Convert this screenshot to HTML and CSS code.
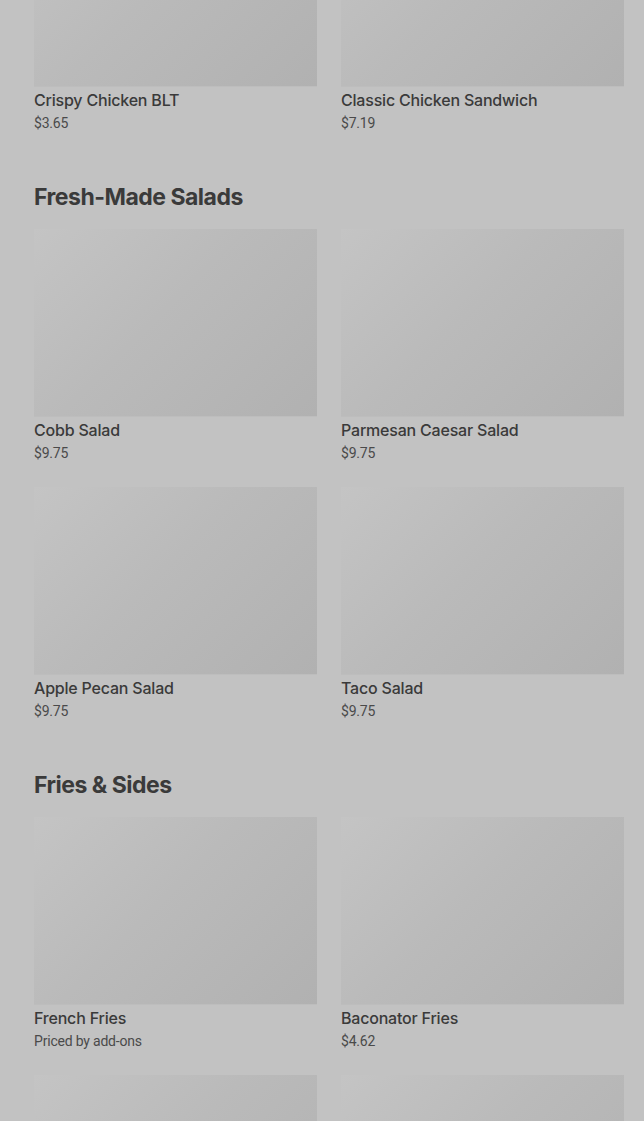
FILE: index.html
```html
<!DOCTYPE html>
<html lang="en">
<head>
    <meta charset="UTF-8">
    <meta name="viewport" content="width=device-width, initial-scale=1.0">
    <title>Menu</title>
    <link rel="stylesheet" href="styles.css">
</head>
<body>
    <div class="menu">
        <section class="section">
            <div class="grid">
                <div class="item">
                    <div class="thumb"></div>
                    <div class="name">Crispy Chicken BLT</div>
                    <div class="price">$3.65</div>
                </div>
                <div class="item">
                    <div class="thumb"></div>
                    <div class="name">Classic Chicken Sandwich</div>
                    <div class="price">$7.19</div>
                </div>
            </div>
        </section>

        <section class="section">
            <h2 class="section-title">Fresh-Made Salads</h2>
            <div class="grid">
                <div class="item">
                    <div class="thumb"></div>
                    <div class="name">Cobb Salad</div>
                    <div class="price">$9.75</div>
                </div>
                <div class="item">
                    <div class="thumb"></div>
                    <div class="name">Parmesan Caesar Salad</div>
                    <div class="price">$9.75</div>
                </div>
                <div class="item">
                    <div class="thumb"></div>
                    <div class="name">Apple Pecan Salad</div>
                    <div class="price">$9.75</div>
                </div>
                <div class="item">
                    <div class="thumb"></div>
                    <div class="name">Taco Salad</div>
                    <div class="price">$9.75</div>
                </div>
            </div>
        </section>

        <section class="section">
            <h2 class="section-title">Fries &amp; Sides</h2>
            <div class="grid">
                <div class="item">
                    <div class="thumb"></div>
                    <div class="name">French Fries</div>
                    <div class="price">Priced by add-ons</div>
                </div>
                <div class="item">
                    <div class="thumb"></div>
                    <div class="name">Baconator Fries</div>
                    <div class="price">$4.62</div>
                </div>
                <div class="item">
                    <div class="thumb"></div>
                    <div class="name">&nbsp;</div>
                    <div class="price">&nbsp;</div>
                </div>
                <div class="item">
                    <div class="thumb"></div>
                    <div class="name">&nbsp;</div>
                    <div class="price">&nbsp;</div>
                </div>
            </div>
        </section>
    </div>
</body>
</html>
```

FILE: styles.css
```css
body {
    margin: 0;
    background-color: #c2c2c2;
    font-family: "Inter", "Roboto", sans-serif;
    color: #3b3b3b;
    overflow: hidden;
    height: 1121px;
}

/* page is scrolled part way down the menu */
.menu {
    margin-top: -101px;
    padding: 0 20px 0 34px;
}

.section {
    margin-bottom: 48px;
}

.section-title {
    margin: 0 0 16px;
    font-size: 23px;
    line-height: 32px;
    font-weight: 700;
    letter-spacing: -0.5px;
    color: #3a3a3a;
}

.grid {
    display: grid;
    grid-template-columns: 283px 283px;
    column-gap: 24px;
    row-gap: 24px;
}

.thumb {
    height: 188px;
    background: linear-gradient(135deg, #c4c4c4 0%, #bababa 45%, #b1b1b1 100%);
    border-bottom: 1px solid #bdbdbd;
    box-sizing: border-box;
}

.name {
    margin-top: 3px;
    font-size: 16px;
    line-height: 20px;
    font-weight: 500;
    letter-spacing: -0.2px;
    color: #3a3a3a;
}

.price {
    margin-top: 3px;
    font-family: "Roboto", sans-serif;
    font-size: 14px;
    line-height: 20px;
    letter-spacing: -0.2px;
    color: #4a4a4a;
}
```
